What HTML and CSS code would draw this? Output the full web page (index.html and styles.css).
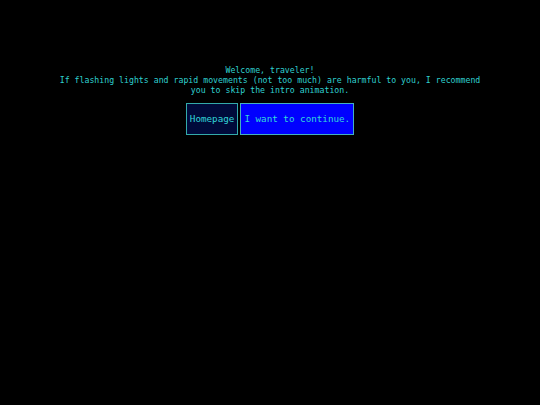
FILE: index.html
```html
<!DOCTYPE html>
<html>
<head>
<meta charset="utf-8">
<link rel="stylesheet" href="styles.css">
</head>
<body>
<main class="intro">
  <p class="message">Welcome, traveler!<br>If flashing lights and rapid movements (not too much) are harmful to you, I recommend<br>you to skip the intro animation.</p>
  <div class="actions">
    <button class="btn btn-home">Homepage</button>
    <button class="btn btn-continue">I want to continue.</button>
  </div>
</main>
</body>
</html>
```
FILE: styles.css
```css
html, body {
  margin: 0;
  padding: 0;
  background: #000;
  height: 100%;
}
.intro {
  display: flex;
  flex-direction: column;
  align-items: center;
  padding-top: 65px;
  font-family: "DejaVu Sans Mono", monospace;
  color: #2fd0d0;
}
.message {
  margin: 0;
  font-size: 8.22px;
  line-height: 10px;
  text-align: center;
}
.actions {
  display: flex;
  gap: 2px;
  margin-top: 8px;
}
.btn {
  font-family: "DejaVu Sans Mono", monospace;
  font-size: 9.25px;
  height: 32px;
  padding: 0 3px 1px;
  color: #33d8d8;
  border: 1px solid #33aaaa;
  margin: 0;
}
.btn-home {
  background: #000a3a;
}
.btn-continue {
  background: #0000ff;
  border-color: #44b0c0;
}
```
